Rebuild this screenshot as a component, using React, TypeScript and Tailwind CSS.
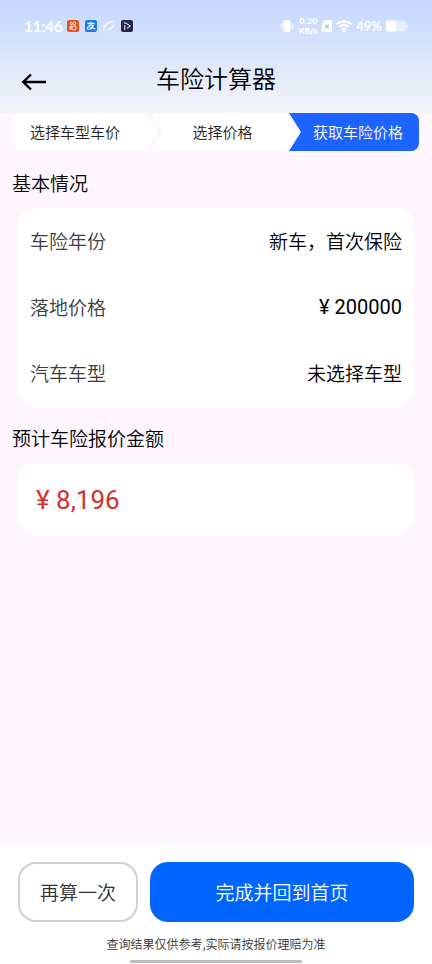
import type { ReactNode } from 'react';

const DETAILS = [
  { label: '车险年份', value: '新车，首次保险' },
  { label: '落地价格', value: '¥ 200000', numeric: true },
  { label: '汽车车型', value: '未选择车型' },
];

function StatusBar() {
  return (
    <div className="flex items-center justify-between pt-4 px-6 text-white">
      <div className="flex items-center gap-[6px]">
        <span className="w-[37px] text-[15px] leading-5 font-bold font-['Lato',sans-serif]">11:46</span>
        <svg viewBox="0 0 12 12" className="w-3 h-3" aria-hidden="true">
          <rect width="12" height="12" rx="2" fill="#e8501c" />
          <g fill="none" stroke="#fff" strokeWidth=".9">
            <circle cx="4.4" cy="3.6" r="1.1" />
            <circle cx="7.4" cy="3.4" r="1.4" />
            <rect x="5" y="6" width="4" height="3.8" rx="1" />
            <path d="M5 7.200 3 6.200v3.400l2-1" />
          </g>
        </svg>
        <svg viewBox="0 0 12 12" className="w-3 h-3" aria-hidden="true">
          <rect width="12" height="12" rx="2" fill="#1b78ee" />
          <path d="M2.500 3.400h7M6 1.800v3.400M3.200 5.200h5.200C7.600 7.400 5.800 9.200 3.800 9.200 1.600 9.200 1.800 6.600 4 6.800c2 .2 4 1.400 6.400 2.400" fill="none" stroke="#fff" strokeWidth="1.100" />
        </svg>
        <svg viewBox="0 0 12 12" className="w-3 h-3" aria-hidden="true">
          <path d="M.6 9.400C-.4 5 4.600.6 9.200 1.400 6 2.600 2.800 5.600.6 9.400zM11.400 2.600c1 4.400-4 8.800-8.600 8C6 9.400 9.200 6.400 11.400 2.600z" fill="#fff" opacity=".8" />
          <path d="M.8 10.600C-.6 8 8.600.2 11.400 1.600" fill="none" stroke="#fff" strokeWidth=".8" />
        </svg>
        <svg viewBox="0 0 12 12" className="w-3 h-3" aria-hidden="true">
          <rect width="12" height="12" rx="2" fill="#25284b" />
          <path d="M3.800 5.200v4.600M3.800 2.600 9.400 6 5.800 8.400M3.800 2.400v1.400" fill="none" stroke="#fff" strokeWidth="1" />
        </svg>
      </div>
      <div className="flex items-center gap-1">
        <svg viewBox="0 0 14 12" className="w-[14px] h-3" fill="#fff" aria-hidden="true">
          <rect x="3.500" width="7" height="12" rx="1.500" />
          <path d="M2.600 2.500v7L1.400 8.800V7.200L0 6l1.400-1.200V3.200zM11.400 2.500v7l1.200-.7V7.200L14 6l-1.400-1.200V3.200z" opacity=".7" />
        </svg>
        <span className="flex flex-col w-5 text-center text-[8px] leading-[10px] font-bold font-['Inter',sans-serif]">
          <span>0.20</span>
          <span>KB/s</span>
        </span>
        <svg viewBox="0 0 10 12" className="w-[10px] h-3" aria-hidden="true">
          <path d="M3.500 0H8.500A1.500 1.500 0 0 1 10 1.500v9A1.500 1.500 0 0 1 8.500 12h-7A1.500 1.500 0 0 1 0 10.500V3.500z" fill="#fff" />
          <path d="m3.200 4.600 3.600 3.600M6.800 4.600 3.200 8.200" stroke="#a9bfe8" strokeWidth="1.300" />
        </svg>
        <svg viewBox="0 0 16 12" className="w-4 h-3" fill="none" stroke="#fff" strokeWidth="2" aria-hidden="true">
          <path d="M.8 4.200a10.200 10.200 0 0 1 14.400 0M3.300 7a6.600 6.600 0 0 1 9.400 0M5.800 9.500a3.200 3.200 0 0 1 4.400 0" />
          <circle cx="8" cy="11" r=".6" fill="#fff" />
        </svg>
        <span className="text-[13px] leading-5 font-bold font-['Lato',sans-serif]">49%</span>
        <svg viewBox="0 0 22 12" className="w-[22px] h-3" fill="#fff" aria-hidden="true">
          <rect y=".5" width="20" height="11" rx="2.500" opacity=".5" />
          <path d="M2.500.5H10v11H2.500A2.500 2.500 0 0 1 0 9V3A2.500 2.500 0 0 1 2.500.5z" />
          <path d="M20.500 3.500v5q1.500-1 1.500-2.500t-1.500-2.500z" opacity=".5" />
        </svg>
      </div>
    </div>
  );
}

function Card({ children }: { children: ReactNode }) {
  return <div className="mx-[6px] rounded-[18px] bg-white">{children}</div>;
}

export default function App() {
  return (
    <div className="flex flex-col min-h-screen bg-[#fdf6ff] text-black font-[350] font-['Noto_Sans_CJK_SC',sans-serif]">
      <header className="h-[113px] bg-linear-to-b from-[#c4d7ff] to-[#f4f4f6]">
        <StatusBar />
        <div className="grid grid-cols-[1fr_auto_1fr] items-center h-10 mt-[22px] px-[21px]">
          <button type="button" aria-label="返回" className="w-[26px] pt-2">
            <svg viewBox="0 0 26 18" className="w-[26px] h-[18px]" fill="none" stroke="#000" strokeWidth="2.400" aria-hidden="true">
              <path d="M2 9h23M10 1.500 2.200 9l7.800 7.500" />
            </svg>
          </button>
          <h1 className="text-2xl leading-8">车险计算器</h1>
        </div>
      </header>

      <main className="flex-1 px-3">
        <ol className="grid grid-cols-[139fr_138fr_130fr] h-[38px] mr-px text-[15px] leading-[38px] text-center text-[#222]">
          <li className="-mr-[7px] pr-5 rounded-l-lg bg-white [clip-path:polygon(0_0,calc(100%-12px)_0,100%_50%,calc(100%-12px)_100%,0_100%)]">选择车型车价</li>
          <li className="-mr-[9px] pr-1 bg-white [clip-path:polygon(0_0,calc(100%-12px)_0,100%_50%,calc(100%-12px)_100%,0_100%,12px_50%)]">选择价格</li>
          <li className="pl-2 rounded-r-lg bg-[#1d63ff] text-white [clip-path:polygon(0_0,100%_0,100%_100%,0_100%,12px_50%)]">获取车险价格</li>
        </ol>

        <section>
          <h2 className="mt-[18px] mb-[11px] text-[19px] leading-7">基本情况</h2>
          <Card>
            <dl className="text-[19px]">
              {DETAILS.map(({ label, value, numeric }) => (
                <div key={label} className="flex items-center justify-between h-[66px] px-3">
                  <dt className="text-[#3c3c3c]">{label}</dt>
                  <dd className={numeric ? "text-xl font-normal font-['Roboto',sans-serif]" : ''}>{value}</dd>
                </div>
              ))}
            </dl>
          </Card>
        </section>

        <section>
          <h2 className="mt-[18px] mb-[11px] text-[19px] leading-7">预计车险报价金额</h2>
          <Card>
            <p className="px-[18px] pt-[18px] pb-[14px] text-[26px] leading-[39px] font-normal text-[#d32f2f] font-['Roboto',sans-serif]">¥ 8,196</p>
          </Card>
        </section>
      </main>

      <footer className="bg-white px-[18px] pt-[18px]">
        <div className="grid grid-cols-[120fr_264fr] gap-3 h-[60px] text-[19px]">
          <button type="button" className="border-2 border-[#d0d0d0] rounded-[18px] text-[#333]">再算一次</button>
          <button type="button" className="rounded-[18px] bg-[#0064ff] text-white">完成并回到首页</button>
        </div>
        <p className="mt-3 text-xs leading-5 text-center text-[#333]">查询结果仅供参考,实际请按报价理赔为准</p>
        <div className="w-[172px] h-[3px] mx-auto mt-[6px] mb-[1px] rounded-full bg-[#bbb]" />
      </footer>
    </div>
  );
}
